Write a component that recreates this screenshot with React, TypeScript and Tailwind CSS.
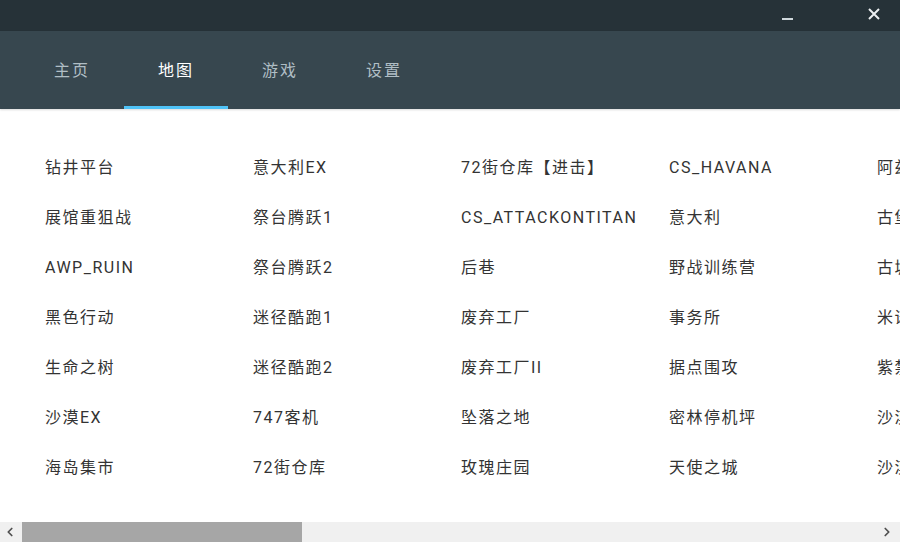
import { ChevronLeft, ChevronRight } from 'lucide-react';

const tabs = ['主页', '地图', '游戏', '设置'];

const columns: string[][] = [
  ['钻井平台', '展馆重狙战', 'AWP_RUIN', '黑色行动', '生命之树', '沙漠EX', '海岛集市'],
  ['意大利EX', '祭台腾跃1', '祭台腾跃2', '迷径酷跑1', '迷径酷跑2', '747客机', '72街仓库'],
  ['72街仓库【进击】', 'CS_ATTACKONTITAN', '后巷', '废弃工厂', '废弃工厂II', '坠落之地', '玫瑰庄园'],
  ['CS_HAVANA', '意大利', '野战训练营', '事务所', '据点围攻', '密林停机坪', '天使之城'],
  ['阿兹特克', '古堡', '古城', '米诺斯', '紫禁城', '沙漠灰', '沙漠2'],
];

export default function App() {
  const active = 1;

  return (
    <div
      className="w-[900px] h-[542px] flex flex-col bg-white overflow-hidden"
      style={{ fontFamily: 'Roboto, "Noto Sans CJK SC", sans-serif' }}
    >
      {/* title bar */}
      <div className="h-[31px] bg-[#263238] flex items-center justify-end shrink-0">
        <div className="w-[11px] h-[2px] bg-[#cfd8dc] mt-[7px] mr-[75px]" />
        <svg width="12" height="12" viewBox="0 0 12 12" className="mr-[20px] mb-[4px]">
          <path d="M1 1 L11 11 M11 1 L1 11" stroke="#eceff1" strokeWidth="2" />
        </svg>
      </div>

      {/* tabs */}
      <div className="h-[78px] bg-[#37474f] flex pl-[20px] shrink-0 shadow-[0_1px_2px_rgba(0,0,0,0.15)]">
        {tabs.map((t, i) => (
          <div
            key={t}
            className={
              'w-[104px] flex items-center justify-center pt-[4px] text-[16px] tracking-[2px] border-b-[3px] ' +
              (i === active ? 'text-white border-[#4fc3f7]' : 'text-[#b0bec5] border-transparent')
            }
          >
            {t}
          </div>
        ))}
      </div>

      {/* map list */}
      <div className="flex-1 flex pl-[45px] pt-[34px] overflow-hidden">
        {columns.map((col, ci) => (
          <div key={ci} className="w-[208px] shrink-0 flex flex-col">
            {col.map((name) => (
              <div
                key={name}
                className="h-[50px] flex items-center text-[16px] text-[#333333] tracking-[1.5px] whitespace-nowrap"
              >
                {name}
              </div>
            ))}
          </div>
        ))}
      </div>

      {/* scrollbar */}
      <div className="h-[20px] bg-[#f0f0f0] flex items-center shrink-0">
        <ChevronLeft size={14} strokeWidth={3} className="text-[#505050] ml-[3px] w-[14px]" />
        <div className="h-[20px] w-[280px] bg-[#a6a6a6] ml-[5px]" />
        <div className="flex-1" />
        <ChevronRight size={14} strokeWidth={3} className="text-[#505050] mr-[6px]" />
      </div>
    </div>
  );
}
